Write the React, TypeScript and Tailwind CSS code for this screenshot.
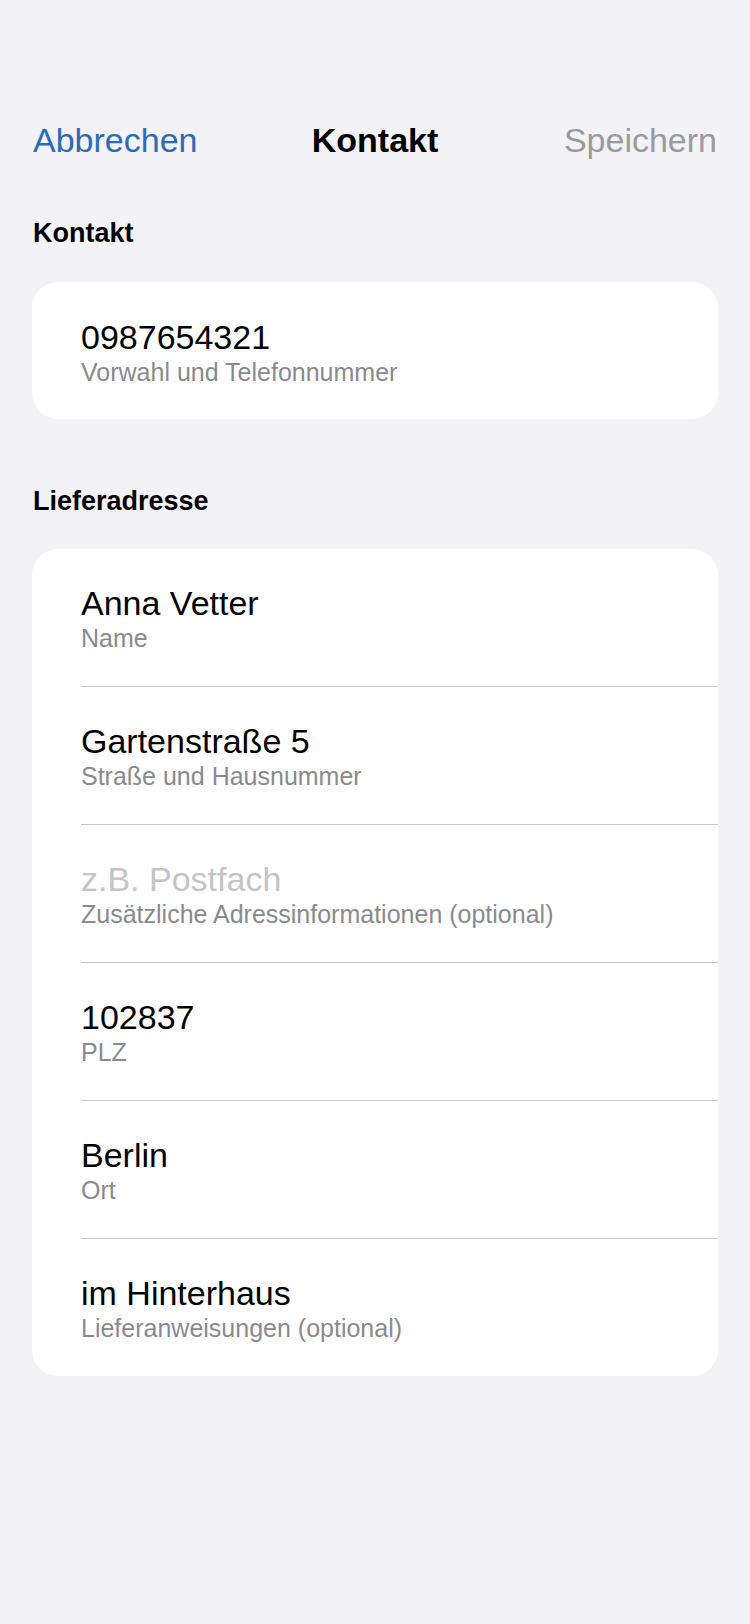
const font = { fontFamily: '"Liberation Sans", Arial, sans-serif' }

type Field = { value: string; label: string; placeholder?: boolean }

const address: Field[] = [
  { value: 'Anna Vetter', label: 'Name' },
  { value: 'Gartenstraße 5', label: 'Straße und Hausnummer' },
  { value: 'z.B. Postfach', label: 'Zusätzliche Adressinformationen (optional)', placeholder: true },
  { value: '102837', label: 'PLZ' },
  { value: 'Berlin', label: 'Ort' },
  { value: 'im Hinterhaus', label: 'Lieferanweisungen (optional)' },
]

function FieldRow({ field, last }: { field: Field; last: boolean }) {
  return (
    <div className="pl-[49px]">
      <div
        className={
          last
            ? 'pt-[34px] pb-[33px]'
            : 'pt-[34px] pb-[33px] border-b border-[#c6c6c8]'
        }
      >
        <div
          className={
            field.placeholder
              ? 'text-[34px] leading-[40px] text-[#c4c4c6]'
              : 'text-[34px] leading-[40px] text-black'
          }
        >
          {field.value}
        </div>
        <div className="text-[25px] leading-[30px] text-[#8a8a8e]">{field.label}</div>
      </div>
    </div>
  )
}

export default function App() {
  return (
    <div className="min-h-[1624px] w-[750px] bg-[#f2f2f7] pt-[96px] antialiased" style={font}>
      <nav className="h-[88px] px-[33px] flex items-center justify-between relative">
        <span className="text-[34px] text-[#2b6cb8]">Abbrechen</span>
        <span className="absolute left-0 right-0 text-center text-[34px] font-bold text-black pointer-events-none">
          Kontakt
        </span>
        <span className="text-[34px] text-[#9b9b9d]">Speichern</span>
      </nav>

      <h2 className="mt-[33px] px-[33px] text-[27px] leading-[32px] font-bold text-black">Kontakt</h2>
      <section className="mt-[33px] mx-[32px] rounded-[26px] bg-white">
        <div className="pl-[49px] pt-[35px] pb-[32px]">
          <div className="text-[34px] leading-[40px] text-black">0987654321</div>
          <div className="text-[25px] leading-[30px] text-[#8a8a8e]">Vorwahl und Telefonnummer</div>
        </div>
      </section>

      <h2 className="mt-[66px] px-[33px] text-[27px] leading-[32px] font-bold text-black">Lieferadresse</h2>
      <section className="mt-[32px] mx-[32px] rounded-[26px] bg-white overflow-hidden">
        {address.map((f, i) => (
          <FieldRow key={f.label} field={f} last={i === address.length - 1} />
        ))}
      </section>
    </div>
  )
}
